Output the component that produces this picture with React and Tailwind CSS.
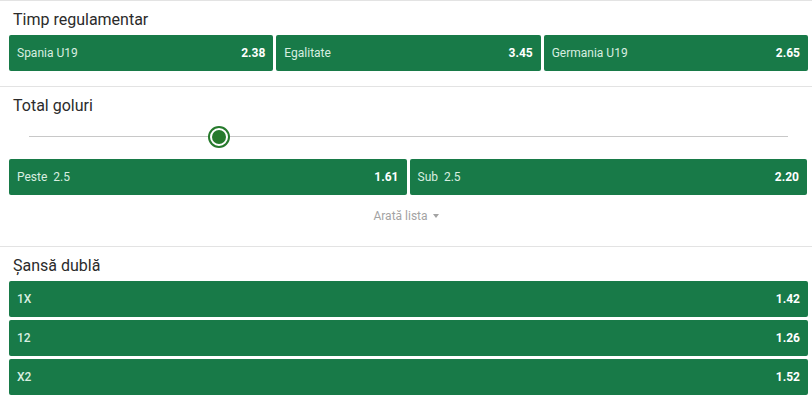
import React from "react";

const font = { fontFamily: "Roboto, 'Noto Sans', sans-serif" };

function OddButton({ label, odd, className = "", labelClass = "" }) {
  return (
    <div
      className={`flex h-[36px] items-center justify-between rounded-[2px] bg-[#187a48] pl-[8px] pr-[8px] ${className}`}
    >
      <span className={`text-[12px] text-[#d8eee0] whitespace-pre ${labelClass}`}>{label}</span>
      <span className="text-[12px] font-bold text-white">{odd}</span>
    </div>
  );
}

function Title({ children }) {
  return (
    <div className="h-[34px] pl-[4px] pt-[8px] text-[16px] leading-[22px] text-[#2b2b2b]">
      {children}
    </div>
  );
}

export default function App() {
  const doubleChance = [
    { label: "1X", odd: "1.42" },
    { label: "12", odd: "1.26" },
    { label: "X2", odd: "1.52" },
  ];

  return (
    <div className="w-[812px] h-[401px] overflow-hidden bg-white" style={font}>
      {/* Timp regulamentar */}
      <section className="border-t border-[#e3e3e3] px-[9px] pb-[15px]">
        <Title>Timp regulamentar</Title>
        <div className="flex w-[799px] gap-[3px]">
          <OddButton className="flex-1" label="Spania U19" odd="2.38" />
          <OddButton className="flex-1" label="Egalitate" odd="3.45" />
          <OddButton className="flex-1" label="Germania U19" odd="2.65" />
        </div>
      </section>

      {/* Total goluri */}
      <section className="border-t border-[#e3e3e3] px-[9px]">
        <Title>Total goluri</Title>
        <div className="relative h-[38px] mx-[20px] w-[759px]">
          <div className="absolute left-0 right-0 top-[15px] h-px bg-[#c8c8c8]" />
          <div className="absolute left-[179px] top-[5px] flex h-[22px] w-[22px] items-center justify-center rounded-full border-2 border-[#267a2c] bg-white">
            <div className="h-[14px] w-[14px] rounded-full bg-[#267a2c]" />
          </div>
        </div>
        <div className="flex w-[798px] gap-[3px]">
          <OddButton className="flex-1" label="Peste  2.5" odd="1.61" />
          <OddButton className="flex-1" label="Sub  2.5" odd="2.20" />
        </div>
        <div className="flex h-[51px] items-start justify-center pt-[12px]">
          <span className="flex items-center gap-[5px] text-[12px] text-[#a3a3a3]">
            Arată lista
            <svg width="6" height="4" viewBox="0 0 6 4">
              <path d="M0 0h6L3 4z" fill="#a3a3a3" />
            </svg>
          </span>
        </div>
      </section>

      {/* Șansă dublă */}
      <section className="border-t border-[#e3e3e3] px-[9px]">
        <Title>Șansă dublă</Title>
        <div className="flex w-[799px] flex-col gap-[3px]">
          {doubleChance.map((row) => (
            <OddButton
              key={row.label}
              label={row.label}
              odd={row.odd}
              labelClass="font-medium"
            />
          ))}
        </div>
      </section>
    </div>
  );
}
